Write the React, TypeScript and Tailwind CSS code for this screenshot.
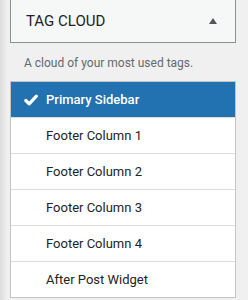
const areas = ['Footer Column 1', 'Footer Column 2', 'Footer Column 3', 'Footer Column 4', 'After Post Widget'];

export default function App() {
  return (
    <div
      className="h-[300px] w-[248px] overflow-hidden bg-[linear-gradient(to_right,#dcdcdc,#f0f0f1_7px)] pl-[10px] pr-[12px] text-[#1d2327]"
      style={{ fontFamily: 'Roboto, "Liberation Sans", sans-serif' }}
    >
      <div className="flex h-[43px] items-center justify-between border border-t-0 border-[#8c8f94] bg-[#f6f7f7] pl-[15px] pr-[18px]">
        <span className="text-[15px] leading-none">TAG CLOUD</span>
        <svg width="8" height="6" viewBox="0 0 8 6" className="mb-[1px]">
          <path d="M4 0L8 6H0Z" fill="#50575e" />
        </svg>
      </div>

      <p className="pl-[14px] pt-[12px] text-[12px] leading-[16px] text-[#646970]">
        A cloud of your most used tags.
      </p>

      <ul className="mt-[10px] border border-[#c3c4c7] bg-white">
        <li className="flex h-[35px] items-center gap-[8px] bg-[#2271b1] pl-[13px] text-[13px] font-medium text-white">
          <svg width="14" height="12" viewBox="0 0 14 12">
            <path d="M1.8 6.5L5.2 9.8L12.3 2.2" fill="none" stroke="white" strokeWidth="3.2" strokeLinecap="round" strokeLinejoin="round" />
          </svg>
          Primary Sidebar
        </li>
        {areas.map((name) => (
          <li
            key={name}
            className="flex h-[36px] items-center border-t border-[#dcdcde] pl-[35px] text-[13px] text-[#1d2327]"
          >
            {name}
          </li>
        ))}
      </ul>
    </div>
  );
}
